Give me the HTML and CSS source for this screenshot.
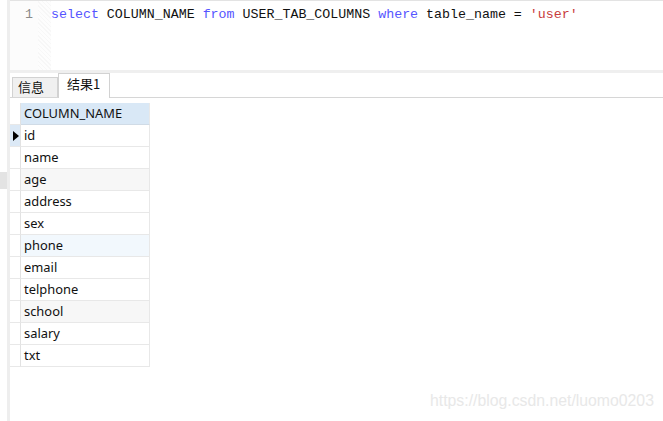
FILE: index.html
```html
<!DOCTYPE html>
<html>
<head>
<meta charset="utf-8">
<link rel="stylesheet" href="styles.css">
</head>
<body>
<div class="app">
  <div class="leftbar">
    <div class="thumb-space"></div>
    <div class="thumb"></div>
  </div>
  <div class="main">
    <div class="editor">
      <div class="gutter">1</div>
      <div class="fold"></div>
      <div class="code"><span class="kw">select</span> COLUMN_NAME <span class="kw">from</span> USER_TAB_COLUMNS <span class="kw">where</span> table_name = <span class="str">'user'</span></div>
    </div>
    <div class="band"></div>
    <div class="tabs">
      <div class="tab">信息</div>
      <div class="tab active">结果1</div>
    </div>
    <div class="result">
      <div class="grid">
        <div class="ind head"></div><div class="cell head">COLUMN_NAME</div>
        <div class="ind sel"><span class="arrow"></span></div><div class="cell">id</div>
        <div class="ind"></div><div class="cell">name</div>
        <div class="ind"></div><div class="cell gray">age</div>
        <div class="ind"></div><div class="cell">address</div>
        <div class="ind"></div><div class="cell">sex</div>
        <div class="ind"></div><div class="cell blue">phone</div>
        <div class="ind"></div><div class="cell">email</div>
        <div class="ind"></div><div class="cell">telphone</div>
        <div class="ind"></div><div class="cell gray">school</div>
        <div class="ind"></div><div class="cell">salary</div>
        <div class="ind"></div><div class="cell">txt</div>
      </div>
    </div>
  </div>
  <div class="watermark">https://blog.csdn.net/luomo0203</div>
</div>
</body>
</html>
```

FILE: styles.css
```css
html, body {
  margin: 0;
  padding: 0;
  background: #ffffff;
}
.app {
  position: relative;
  width: 663px;
  height: 421px;
  display: flex;
  overflow: hidden;
}
.leftbar {
  width: 7px;
  border-right: 3px solid #eeeeee;
  display: flex;
  flex-direction: column;
}
.thumb-space {
  height: 172px;
}
.thumb {
  height: 17px;
  background: #e3e3e3;
}
.main {
  flex: 1;
  display: flex;
  flex-direction: column;
}
.editor {
  height: 69px;
  border-top: 1px solid #e3e3e3;
  display: flex;
  background: #ffffff;
}
.gutter {
  width: 23px;
  padding-right: 5px;
  text-align: right;
  font-family: "Liberation Mono", monospace;
  font-size: 13.3px;
  line-height: 16px;
  padding-top: 6px;
  color: #8a8a8a;
  background: #fcfcfc;
}
.fold {
  width: 13px;
  background: repeating-linear-gradient(45deg, #f7f7f7 0 1px, #fdfdfd 1px 3px);
}
.code {
  flex: 1;
  font-family: "Liberation Mono", monospace;
  font-size: 13.3px;
  line-height: 16px;
  padding-top: 6px;
  color: #111111;
  white-space: pre;
}
.kw {
  color: #5555ff;
}
.str {
  color: #c83c3c;
}
.band {
  height: 3px;
  background: #efefef;
}
.tabs {
  height: 24px;
  border-bottom: 1px solid #d6d6d6;
  display: flex;
  align-items: flex-end;
  padding-left: 2px;
}
.tab {
  box-sizing: border-box;
  height: 20px;
  width: 46px;
  border: 1px solid #d2d2d2;
  border-bottom: none;
  background: #f0f0f0;
  font-family: "Noto Sans CJK SC", sans-serif;
  font-size: 13px;
  line-height: 17px;
  padding-left: 5px;
  color: #111111;
}
.tab.active {
  height: 25px;
  width: 52px;
  margin-bottom: -1px;
  background: #ffffff;
  line-height: 20px;
  padding-left: 8px;
}
.result {
  flex: 1;
  padding-top: 5px;
}
.grid {
  display: grid;
  grid-template-columns: 11px 129px;
  grid-auto-rows: 22px;
  font-family: "Noto Sans", sans-serif;
  font-size: 12.9px;
  color: #111111;
}
.ind {
  border-right: 1px solid #e2e2e2;
  border-bottom: 1px solid #e8e8e8;
  background: #ffffff;
  display: flex;
  align-items: center;
}
.ind.sel {
  background: #dce9f6;
}
.arrow {
  width: 0;
  height: 0;
  border-top: 5.5px solid transparent;
  border-bottom: 5.5px solid transparent;
  border-left: 6px solid #000000;
  margin-left: 3px;
}
.cell {
  border-right: 1px solid #e8e8e8;
  border-bottom: 1px solid #e8e8e8;
  padding-left: 3px;
  line-height: 21px;
  white-space: nowrap;
  overflow: hidden;
}
.cell.head {
  background: #d9e8f6;
  border-bottom-color: #d0dbe6;
}
.cell.gray {
  background: #f7f7f7;
}
.cell.blue {
  background: #f2f8fd;
}
.watermark {
  position: absolute;
  left: 430px;
  top: 392px;
  font-family: "Liberation Sans", Arial, sans-serif;
  font-size: 15.8px;
  color: #e8e8e8;
  white-space: nowrap;
}
```
